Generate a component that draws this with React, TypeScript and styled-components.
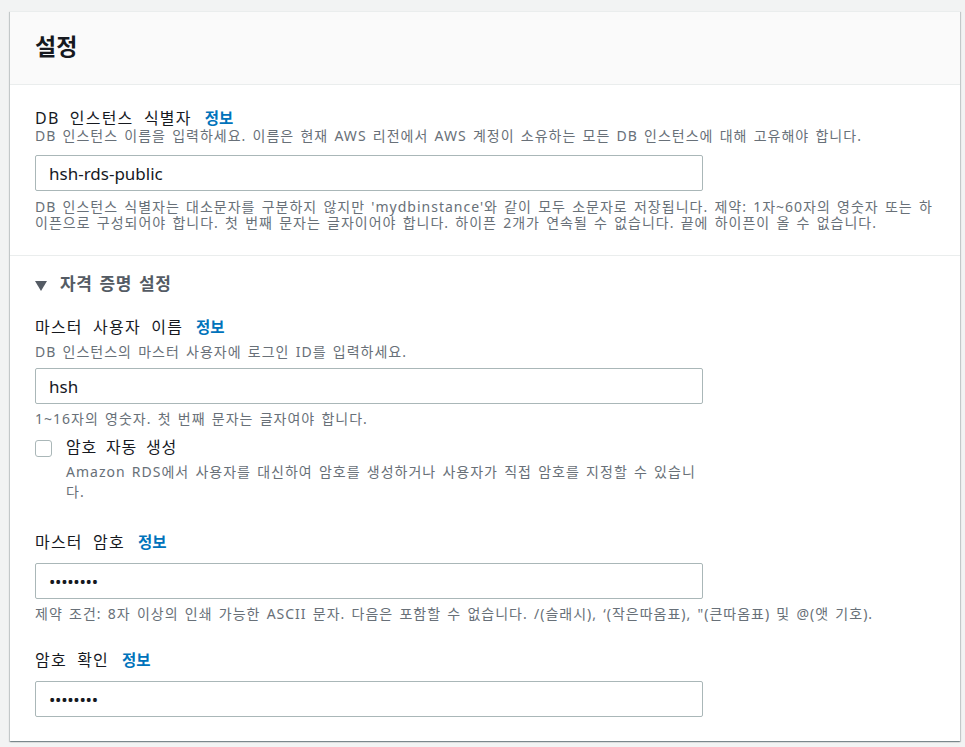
import styled, { createGlobalStyle } from 'styled-components';

const GlobalStyle = createGlobalStyle`
  html, body {
    margin: 0;
    padding: 0;
    background: #f2f3f3;
  }

  body {
    font-family: "Noto Sans", "Noto Sans CJK KR", sans-serif;
    color: #16191f;
  }
`;

const Page = styled.div`
  padding: 11px 5px 6px 10px;
`;

const Card = styled.section`
  background: #ffffff;
  border-top: 1px solid #eaeded;
  box-shadow: 0 1px 1px 0 rgba(0, 28, 36, 0.3),
    1px 1px 1px 0 rgba(0, 28, 36, 0.15),
    -1px 1px 1px 0 rgba(0, 28, 36, 0.15);
`;

const Header = styled.header`
  display: flex;
  align-items: center;
  height: 68px;
  padding: 0 25px 4px;
  background: #fafafa;
  border-bottom: 1px solid #eaeded;
`;

const Title = styled.h2`
  margin: 0;
  font-size: 23px;
  font-weight: 700;
  line-height: 28px;
  color: #16191f;
`;

const Section = styled.div<{ $divider?: boolean; $top: number; $bottom: number }>`
  display: flex;
  flex-direction: column;
  padding: ${(p) => p.$top}px 25px ${(p) => p.$bottom}px;
  border-bottom: ${(p) => (p.$divider ? '1px solid #eaeded' : 'none')};
`;

const Expander = styled.div`
  display: flex;
  align-items: center;
  gap: 13px;
  height: 22px;
  font-size: 17px;
  font-weight: 700;
  line-height: 22px;
  color: #545b64;
  letter-spacing: 0.6px;
  word-spacing: 2px;
`;

const Caret = styled.span`
  width: 0;
  height: 0;
  margin-top: 3px;
  border-left: 6px solid transparent;
  border-right: 6px solid transparent;
  border-top: 10px solid #545b64;
`;

const LabelRow = styled.div<{ $mt?: number }>`
  display: flex;
  align-items: center;
  height: 20px;
  margin-top: ${(p) => p.$mt ?? 0}px;
`;

const Label = styled.label`
  font-size: 16px;
  line-height: 20px;
  color: #16191f;
  letter-spacing: 1.2px;
  word-spacing: 5px;
`;

const InfoLink = styled.a`
  margin-left: 13px;
  font-size: 15.5px;
  font-weight: 700;
  line-height: 20px;
  color: #0073bb;
  text-decoration: none;
  cursor: pointer;
`;

const Description = styled.p<{ $mt?: number; $wide?: boolean }>`
  margin: ${(p) => p.$mt ?? 0}px 0 0;
  max-width: ${(p) => (p.$wide ? 'none' : '668px')};
  font-size: 14px;
  line-height: 16px;
  color: #687078;
  letter-spacing: 1px;
  word-spacing: 1.6px;
`;

const TextInput = styled.input<{ $mt?: number }>`
  box-sizing: border-box;
  width: 668px;
  height: 36px;
  margin-top: ${(p) => p.$mt ?? 11}px;
  padding: 0 13px;
  border: 1px solid #aab7b8;
  border-radius: 2px;
  background: #ffffff;
  font-family: "Noto Sans", "Noto Sans CJK KR", sans-serif;
  font-size: 17px;
  color: #16191f;
  outline: none;

  &[type='password'] {
    letter-spacing: -0.3px;
  }
`;

const CheckRow = styled.div`
  display: flex;
  gap: 14px;
  margin-top: 10px;
`;

const CheckBox = styled.span`
  box-sizing: border-box;
  flex: none;
  width: 17px;
  height: 17px;
  margin-top: 3px;
  border: 1px solid #aab7b8;
  border-radius: 3px;
  background: #ffffff;
`;

const CheckText = styled.div`
  display: flex;
  flex-direction: column;
  width: 637px;
`;

const CheckLabel = styled.label`
  font-size: 16px;
  line-height: 20px;
  color: #16191f;
  letter-spacing: 0.8px;
  word-spacing: 4px;
`;

const CheckDescription = styled.p`
  margin: 5px 0 0;
  font-size: 14px;
  line-height: 20px;
  color: #687078;
  letter-spacing: 1px;
  word-spacing: 1.6px;
`;

function App () {
  return (
    <>
      <GlobalStyle />
      <Page>
        <Card>
          <Header>
            <Title>설정</Title>
          </Header>

          <Section $divider $top={23} $bottom={24}>
            <LabelRow>
              <Label>DB 인스턴스 식별자</Label>
              <InfoLink>정보</InfoLink>
            </LabelRow>
            <Description $wide>
              DB 인스턴스 이름을 입력하세요. 이름은 현재 AWS 리전에서 AWS 계정이 소유하는 모든 DB 인스턴스에 대해 고유해야 합니다.
            </Description>
            <TextInput readOnly defaultValue="hsh-rds-public" />
            <Description $wide $mt={8}>
              DB 인스턴스 식별자는 대소문자를 구분하지 않지만 'mydbinstance'와 같이 모두 소문자로 저장됩니다. 제약: 1자~60자의 영숫자 또는 하이픈으로 구성되어야 합니다. 첫 번째 문자는 글자이어야 합니다. 하이픈 2개가 연속될 수 없습니다. 끝에 하이픈이 올 수 없습니다.
            </Description>
          </Section>

          <Section $top={17} $bottom={24}>
            <Expander>
              <Caret />
              자격 증명 설정
            </Expander>

            <LabelRow $mt={22}>
              <Label>마스터 사용자 이름</Label>
              <InfoLink>정보</InfoLink>
            </LabelRow>
            <Description $mt={7}>DB 인스턴스의 마스터 사용자에 로그인 ID를 입력하세요.</Description>
            <TextInput $mt={8} readOnly defaultValue="hsh" />
            <Description $mt={7}>1~16자의 영숫자. 첫 번째 문자는 글자여야 합니다.</Description>

            <CheckRow>
              <CheckBox />
              <CheckText>
                <CheckLabel>암호 자동 생성</CheckLabel>
                <CheckDescription>
                  Amazon RDS에서 사용자를 대신하여 암호를 생성하거나 사용자가 직접 암호를 지정할 수 있습니다.
                </CheckDescription>
              </CheckText>
            </CheckRow>

            <LabelRow $mt={30}>
              <Label>마스터 암호</Label>
              <InfoLink>정보</InfoLink>
            </LabelRow>
            <TextInput type="password" readOnly defaultValue="password" />
            <Description $wide $mt={7}>
              제약 조건: 8자 이상의 인쇄 가능한 ASCII 문자. 다음은 포함할 수 없습니다. /(슬래시), ‘(작은따옴표), "(큰따옴표) 및 @(앳 기호).
            </Description>

            <LabelRow $mt={28}>
              <Label>암호 확인</Label>
              <InfoLink>정보</InfoLink>
            </LabelRow>
            <TextInput type="password" readOnly defaultValue="password" />
          </Section>
        </Card>
      </Page>
    </>
  );
}

export default App;
